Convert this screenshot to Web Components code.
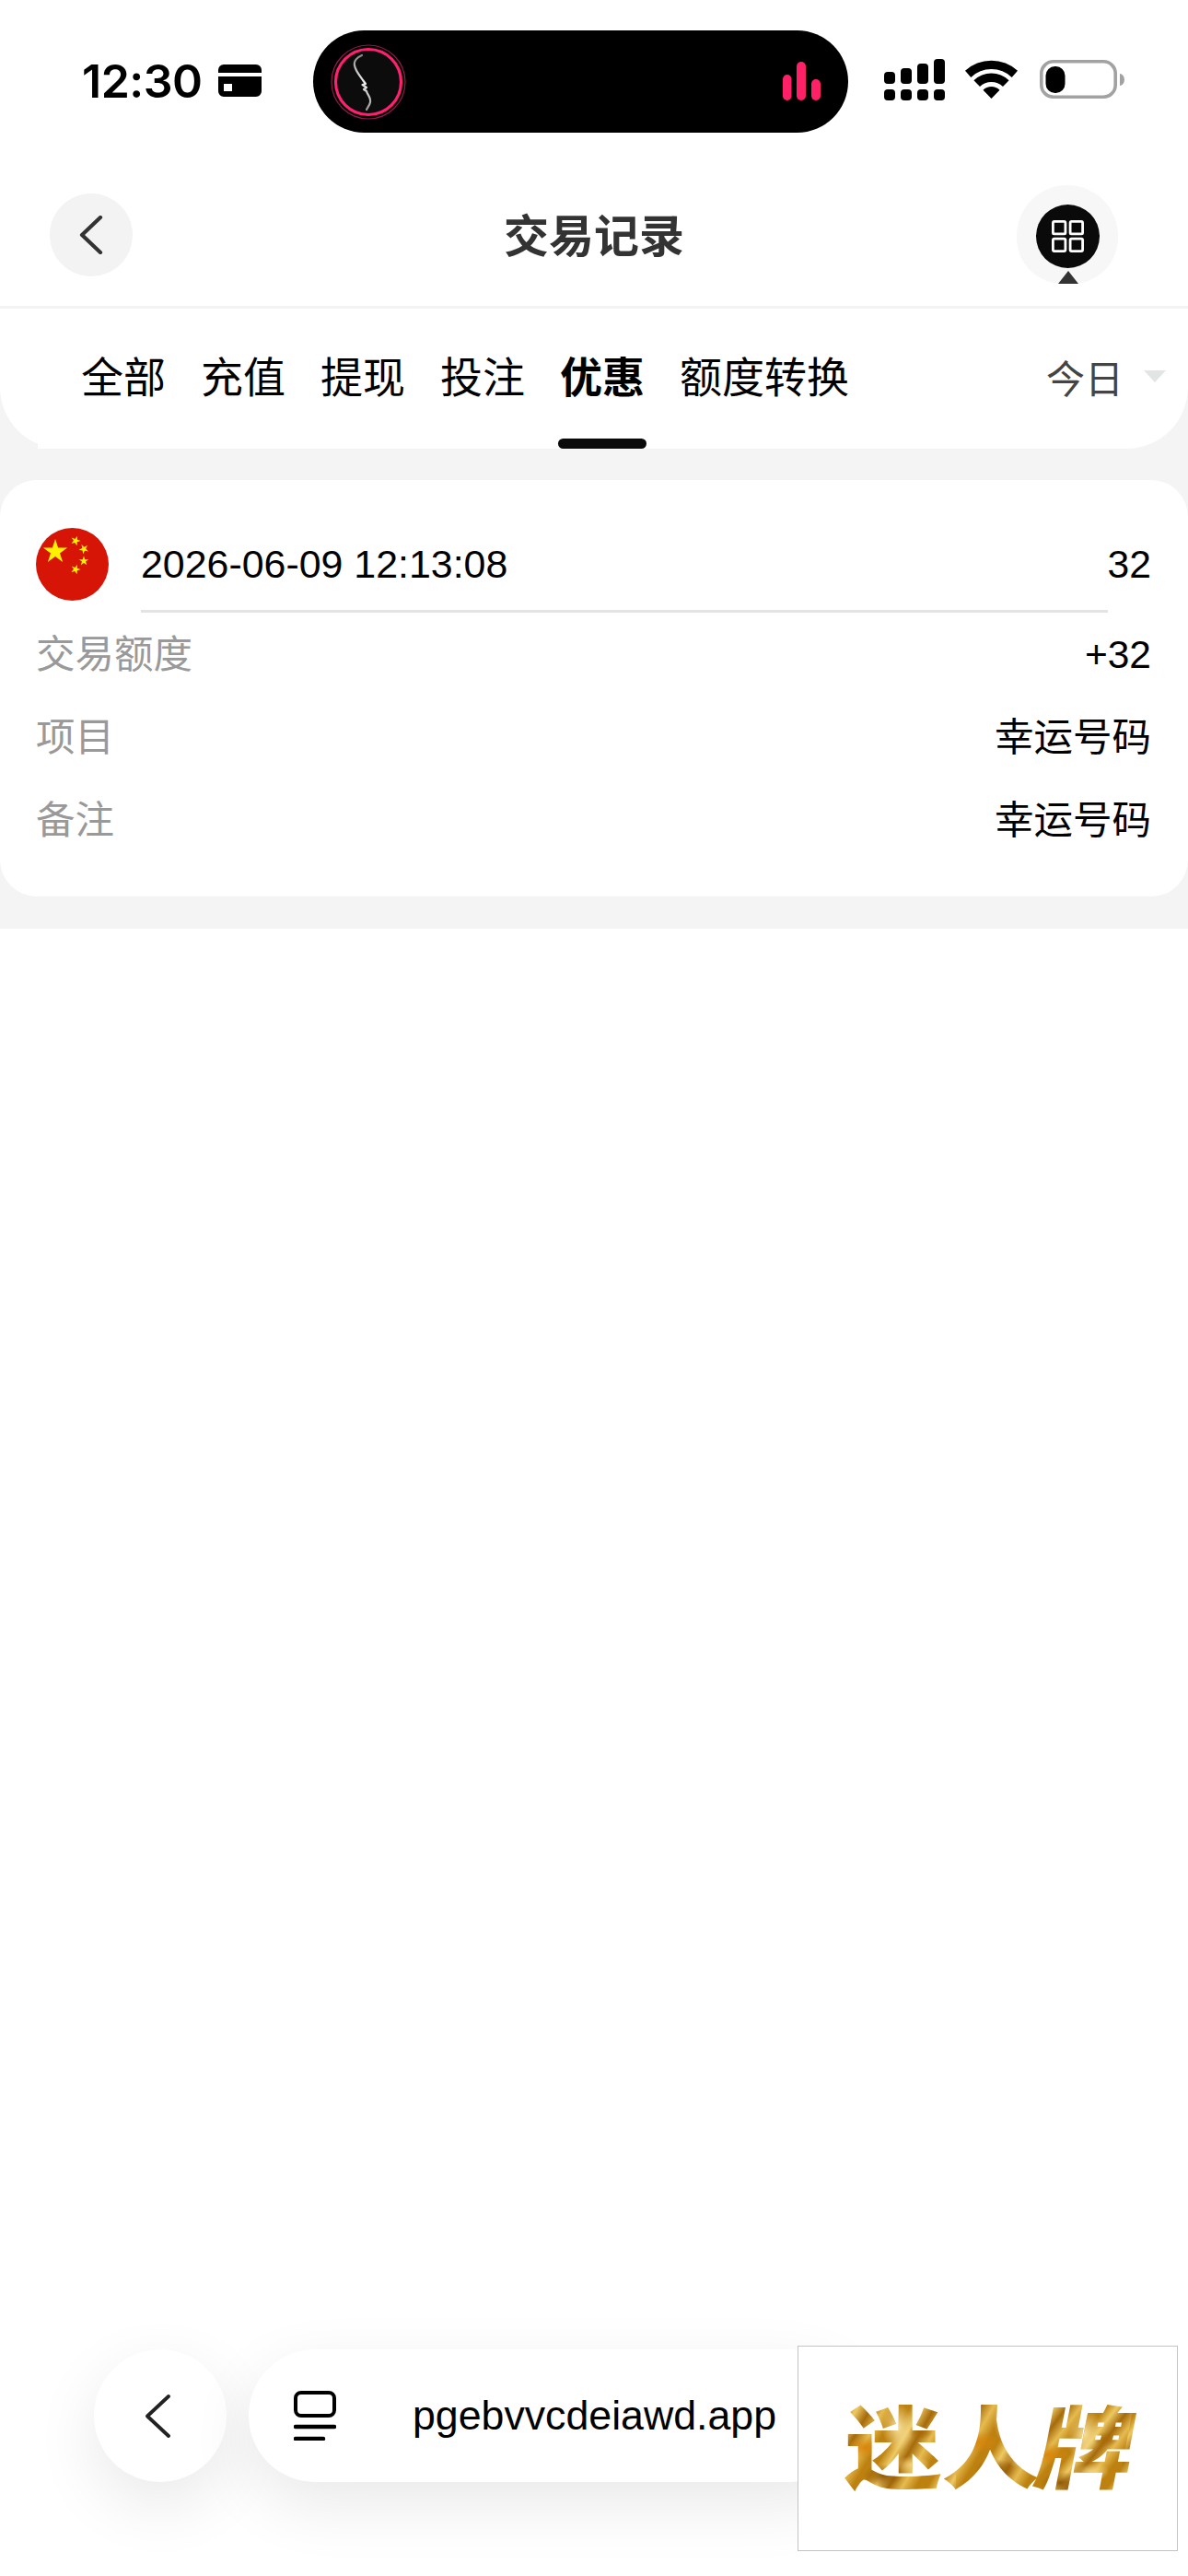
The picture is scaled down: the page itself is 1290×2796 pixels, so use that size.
<!DOCTYPE html>
<html lang="zh">
<head>
<meta charset="utf-8">
<title>交易记录</title>
<style>
  html, body { margin: 0; padding: 0; background: #fff; }
  body {
    width: 1290px; height: 2796px; overflow: hidden; position: relative;
    font-family: "Liberation Sans", "Noto Sans CJK SC", sans-serif;
  }
</style>
</head>
<body>
  <status-bar></status-bar>
  <nav-header>交易记录</nav-header>
  <record-panel>
    <tab-strip>
      <filter-tab>全部</filter-tab>
      <filter-tab>充值</filter-tab>
      <filter-tab>提现</filter-tab>
      <filter-tab>投注</filter-tab>
      <filter-tab active>优惠</filter-tab>
      <filter-tab>额度转换</filter-tab>
    </tab-strip>
    <transaction-card time="2026-06-09 12:13:08" amount="32">
      <detail-row label="交易额度">+32</detail-row>
      <detail-row label="项目">幸运号码</detail-row>
      <detail-row label="备注">幸运号码</detail-row>
    </transaction-card>
  </record-panel>
  <bottom-dock>pgebvvcdeiawd.app</bottom-dock>
  <logo-badge text="迷人牌"></logo-badge>

<script>
// Status bar with the island, time and the signal icons
class StatusBar extends HTMLElement {
  constructor() {
    super();
    this.attachShadow({ mode: 'open' });
    this.shadowRoot.innerHTML = `
      <style>
        :host { display: flex; height: 200px; box-sizing: border-box; padding: 33px 0 0 89px; align-items: flex-start; }
        .time { font: 600 50px/111px Inter, sans-serif; color: #000; width: 129px; letter-spacing: -0.5px; white-space: nowrap; }
        .card { margin: 37px 0 0 19px; }
        .island { width: 581px; height: 111px; margin-left: 56px; border-radius: 56px; background: #000; display: flex; align-items: flex-start; justify-content: space-between; flex: none; }
        .face { margin: 15px 0 0 19px; }
        .bars { margin: 34px 30px 0 0; }
        .signal { margin: 31px 0 0 39px; }
        .wifi { margin: 32px 0 0 22px; }
        .battery { margin: 32px 0 0 24px; }
      </style>
      <div class="time">12:30</div>
      <svg class="card" width="47" height="35" viewBox="0 0 47 35">
        <path fill="#000" d="M0 9V6a6 6 0 0 1 6-6h35a6 6 0 0 1 6 6v3z"/>
        <path fill="#000" fill-rule="evenodd" d="M0 13h47v16a6 6 0 0 1-6 6H6a6 6 0 0 1-6-6z M6 21v8h9v-8z"/>
      </svg>
      <div class="island">
        <svg class="face" width="82" height="82" viewBox="0 0 82 82">
          <defs>
            <linearGradient id="pf" x1="0" y1="0" x2="0" y2="1">
              <stop offset="0" stop-color="#888"/><stop offset=".5" stop-color="#eee"/><stop offset="1" stop-color="#999"/>
            </linearGradient>
          </defs>
          <circle cx="41" cy="41" r="40" fill="none" stroke="#8f1a4c" stroke-width="1.2"/>
          <circle cx="41" cy="41" r="35.5" fill="#0c0c0c" stroke="#ff2070" stroke-width="3.2"/>
          <path fill="none" stroke="url(#pf)" stroke-width="2.2" stroke-linejoin="round" stroke-linecap="round"
            d="M34 12C29 14 25 18 26 23C27 29 31 33 35 39L38 43L34.500 44L39 47L36 49L39 51C40 55 44 58 43 63C42.500 66 40 69 39 71"/>
        </svg>
        <svg class="bars" width="41" height="42" viewBox="0 0 41 42" fill="#ff2167">
          <rect x="0" y="14" width="9.500" height="28" rx="4.700"/>
          <rect x="15" y="0" width="10" height="42" rx="5"/>
          <rect x="31" y="19" width="10" height="23" rx="5"/>
        </svg>
      </div>
      <svg class="signal" width="66" height="45" viewBox="0 0 66 45" fill="#000">
        <rect x="0" y="14" width="12" height="13" rx="4"/><rect x="0" y="33" width="12" height="12" rx="4"/>
        <rect x="18" y="10" width="12" height="17" rx="4"/><rect x="18" y="33" width="12" height="12" rx="4"/>
        <rect x="36" y="5" width="12" height="22" rx="4"/><rect x="36" y="33" width="12" height="12" rx="4"/>
        <rect x="54" y="0" width="12" height="27" rx="4"/><rect x="54" y="33" width="12" height="12" rx="4"/>
      </svg>
      <svg class="wifi" width="57" height="42" viewBox="0 0 57 42" fill="#000">
        <path d="M0 11.800A42 42 0 0 1 57 11.800L50.700 19A32 32 0 0 0 6.300 19Z"/>
        <path d="M9.400 22.200A27.500 27.500 0 0 1 47.600 22.200L41 29.100A18 18 0 0 0 16 29.100Z"/>
        <path d="M19.500 32.700A13 13 0 0 1 37.500 32.700L28.500 42Z"/>
      </svg>
      <svg class="battery" width="92" height="42" viewBox="0 0 92 42">
        <rect x="1.800" y="1.800" width="80.400" height="38.400" rx="13" fill="none" stroke="#a2a2a2" stroke-width="3.600"/>
        <rect x="6.500" y="7" width="21" height="29" rx="10" fill="#000"/>
        <path fill="#a2a2a2" d="M87 15a5 6.500 0 0 1 5 6.500a5 6.500 0 0 1-5 6.500z"/>
      </svg>
    `;
  }
}
customElements.define('status-bar', StatusBar);

// Title row with the back button and the menu button
class NavHeader extends HTMLElement {
  constructor() {
    super();
    this.attachShadow({ mode: 'open' });
    this.shadowRoot.innerHTML = `
      <style>
        :host { display: grid; grid-template-columns: 1fr auto 1fr; align-items: flex-start; height: 132px; padding: 0 54px; border-bottom: 3px solid #f3f3f3; }
        .back { width: 90px; height: 90px; margin-top: 10px; border-radius: 50%; background: #f3f3f3; display: flex; align-items: center; justify-content: center; }
        .title { font: 700 49px/105px "Noto Sans CJK SC", sans-serif; color: #333; }
        .menu { justify-self: end; margin-right: 22px; width: 110px; height: 107px; margin-top: 1px; border-radius: 55px 55px 50px 50px; background: #f7f7f7; position: relative; display: flex; justify-content: center; padding-top: 21px; box-sizing: border-box; }
        .dot { width: 69px; height: 69px; border-radius: 50%; background: #0a0a0a; display: flex; align-items: center; justify-content: center; }
        .arrow { position: absolute; left: 45px; bottom: 0; width: 0; height: 0; border: 11px solid transparent; border-top: 0; border-bottom: 14px solid #333; }
      </style>
      <div><div class="back">
        <svg width="26" height="42" viewBox="0 0 26 42"><path d="M23 2 3 21l20 19" fill="none" stroke="#333" stroke-width="4.200" stroke-linecap="round" stroke-linejoin="round"/></svg>
      </div></div>
      <div class="title"><slot></slot></div>
      <div class="menu">
        <div class="dot">
          <svg width="35" height="35" viewBox="0 0 35 35" fill="none" stroke="#fff" stroke-width="2.800">
            <rect x="1.400" y="1.400" width="13.500" height="13.500" rx="1.500"/><rect x="20.100" y="1.400" width="13.500" height="13.500" rx="1.500"/>
            <rect x="1.400" y="20.100" width="13.500" height="13.500" rx="1.500"/><rect x="20.100" y="20.100" width="13.500" height="13.500" rx="1.500"/>
          </svg>
        </div>
        <div class="arrow"></div>
      </div>
    `;
  }
}
customElements.define('nav-header', NavHeader);

// Grey page section holding the tabs and the cards
class RecordPanel extends HTMLElement {
  constructor() {
    super();
    this.attachShadow({ mode: 'open' });
    this.shadowRoot.innerHTML = `
      <style>
        :host { display: flex; flex-direction: column; gap: 34px; background: #f4f4f4; padding-bottom: 35px; }
      </style>
      <slot></slot>
    `;
  }
}
customElements.define('record-panel', RecordPanel);

// White strip of tabs, with the date filter on the right
class TabStrip extends HTMLElement {
  constructor() {
    super();
    this.attachShadow({ mode: 'open' });
    this.shadowRoot.innerHTML = `
      <style>
        :host { display: flex; height: 152px; padding-left: 41px; background: #fff; border-radius: 0 0 67px 67px; }
        .tabs { display: flex; gap: 38px; padding-left: 47px; background: #fff; }
        .filter { margin-left: auto; display: flex; gap: 22px; padding: 49px 24px 0 0; align-items: flex-start; }
        .filter span { font: 400 42px/45px "Noto Sans CJK SC", sans-serif; color: #444; margin-top: 2px; }
        .caret { margin-top: 18px; width: 0; height: 0; border: 12px solid transparent; border-bottom: 0; border-top: 13px solid #e3e4e6; }
      </style>
      <div class="tabs"><slot></slot></div>
      <div class="filter"><span>今日</span><div class="caret"></div></div>
    `;
  }
}
customElements.define('tab-strip', TabStrip);

class FilterTab extends HTMLElement {
  constructor() {
    super();
    this.attachShadow({ mode: 'open' });
    this.shadowRoot.innerHTML = `
      <style>
        :host { display: block; position: relative; height: 152px; box-sizing: border-box; padding-top: 49px; font: 400 46px/45px "Noto Sans CJK SC", sans-serif; color: #000; white-space: nowrap; }
        :host([active]) { font-weight: 700; }
        :host([active])::after { content: ""; position: absolute; left: -2px; right: -2px; bottom: 0; height: 11px; border-radius: 6px; background: #0a0a0a; }
      </style>
      <slot></slot>
    `;
  }
}
customElements.define('filter-tab', FilterTab);

// One transaction: flag, time, amount and its detail rows
class TransactionCard extends HTMLElement {
  constructor() {
    super();
    this.attachShadow({ mode: 'open' });
    const star = 'M21 12l3.100 9.500h10l-8.100 5.900 3.100 9.500-8.100-5.900-8.100 5.900 3.100-9.500-8.100-5.900h10z';
    this.shadowRoot.innerHTML = `
      <style>
        :host { display: block; background: #fff; border-radius: 40px; padding: 52px 40px 38px 39px; }
        .head { display: flex; align-items: flex-start; height: 92px; }
        .flag { flex: none; width: 79px; height: 79px; margin-right: 35px; }
        .time { flex: 1; box-sizing: border-box; height: 92px; border-bottom: 3px solid #e3e3e3; font: 400 42.900px/78px "Liberation Sans", sans-serif; color: #000; }
        .amount { font: 400 42.700px/78px "Liberation Sans", sans-serif; color: #000; }
      </style>
      <div class="head">
        <svg class="flag" viewBox="0 0 79 79">
          <circle cx="39.500" cy="39.500" r="39.500" fill="#d61507"/>
          <g fill="#fff200">
            <path d="${star}"/>
            <path transform="translate(43 14) rotate(20) scale(.4) translate(-21 -26)" d="${star}"/>
            <path transform="translate(52 23) rotate(45) scale(.4) translate(-21 -26)" d="${star}"/>
            <path transform="translate(52 36) scale(.4) translate(-21 -26)" d="${star}"/>
            <path transform="translate(43 45) rotate(20) scale(.4) translate(-21 -26)" d="${star}"/>
          </g>
        </svg>
        <div class="time"></div>
        <div class="amount"></div>
      </div>
      <slot></slot>
    `;
    this.shadowRoot.querySelector('.time').textContent = this.getAttribute('time') || '';
    this.shadowRoot.querySelector('.amount').textContent = this.getAttribute('amount') || '';
  }
}
customElements.define('transaction-card', TransactionCard);

class DetailRow extends HTMLElement {
  constructor() {
    super();
    this.attachShadow({ mode: 'open' });
    this.shadowRoot.innerHTML = `
      <style>
        :host { display: flex; justify-content: space-between; align-items: center; box-sizing: border-box; height: 90px; padding-top: 2px; font: 400 42.500px/50px "Liberation Sans", "Noto Sans CJK SC", sans-serif; color: #000; }
        .label { color: #999; }
      </style>
      <div class="label"></div>
      <div><slot></slot></div>
    `;
    this.shadowRoot.querySelector('.label').textContent = this.getAttribute('label') || '';
  }
}
customElements.define('detail-row', DetailRow);

// Floating browser bar at the bottom of the screen
class BottomDock extends HTMLElement {
  constructor() {
    super();
    this.attachShadow({ mode: 'open' });
    this.shadowRoot.innerHTML = `
      <style>
        :host { position: absolute; left: 102px; top: 2550px; display: flex; gap: 24px; }
        .btn { width: 144px; height: 144px; border-radius: 50%; background: #fff; box-shadow: 0 24px 70px rgba(0,0,0,.09); display: flex; align-items: center; justify-content: center; }
        .btn svg { margin-left: -6px; }
        .url { width: 660px; height: 144px; border-radius: 72px; background: #fff; box-shadow: 0 24px 70px rgba(0,0,0,.09); display: flex; align-items: center; padding-left: 49px; gap: 83px; box-sizing: border-box; font: 400 44.700px/50px "Liberation Sans", sans-serif; color: #000; }
      </style>
      <div class="btn">
        <svg width="28" height="47" viewBox="0 0 28 47"><path d="M26 2 3 23.500 26 45" fill="none" stroke="#222" stroke-width="3.800" stroke-linecap="round" stroke-linejoin="round"/></svg>
      </div>
      <div class="url">
        <svg width="46" height="54" viewBox="0 0 46 54">
          <rect x="2" y="2" width="42" height="25" rx="6" fill="none" stroke="#000" stroke-width="4"/>
          <path d="M2 39h42M2 52h30" stroke="#000" stroke-width="4.500" stroke-linecap="round"/>
        </svg>
        <span><slot></slot></span>
      </div>
    `;
  }
}
customElements.define('bottom-dock', BottomDock);

// Boxed gold logo lying over the dock
class LogoBadge extends HTMLElement {
  constructor() {
    super();
    this.attachShadow({ mode: 'open' });
    this.shadowRoot.innerHTML = `
      <style>
        :host { position: absolute; left: 866px; top: 2546px; width: 413px; height: 223px; box-sizing: border-box; border: 1.500px solid #c4c4c4; background: #fff; display: flex; align-items: center; justify-content: center; }
        .logo { display: flex; transform: scaleX(1.09); margin: 0 0 14px 6px; font: 900 97px/112px "Noto Sans CJK SC", sans-serif; white-space: nowrap; }
        .logo span {
          display: block;
          color: transparent;
          background-image:
            radial-gradient(ellipse 22px 12px at 22% 55%, #d8860a 0, transparent 100%),
            radial-gradient(ellipse 16px 26px at 55% 35%, #f8e19a 0, transparent 100%),
            radial-gradient(ellipse 18px 10px at 70% 72%, #f4d47c 0, transparent 100%),
            radial-gradient(ellipse 20px 12px at 40% 82%, #8f5606 0, transparent 100%),
            radial-gradient(ellipse 12px 8px at 78% 40%, #a86a08 0, transparent 100%),
            repeating-linear-gradient(118deg, #bd8110 0 10px, #eec964 20px, #a56a0b 32px, #e6bb50 44px, #bd8110 56px);
          -webkit-background-clip: text;
          background-clip: text;
        }
        .logo span:nth-child(2) { background-position: 14px -6px; }
        .logo span:nth-child(3) { transform: skewX(-10deg); background-position: -10px 8px; }
      </style>
      <div class="logo"></div>
    `;
    const logo = this.shadowRoot.querySelector('.logo');
    for (const ch of this.getAttribute('text') || '') {
      const part = document.createElement('span');
      part.textContent = ch;
      logo.appendChild(part);
    }
  }
}
customElements.define('logo-badge', LogoBadge);
</script>
</body>
</html>
